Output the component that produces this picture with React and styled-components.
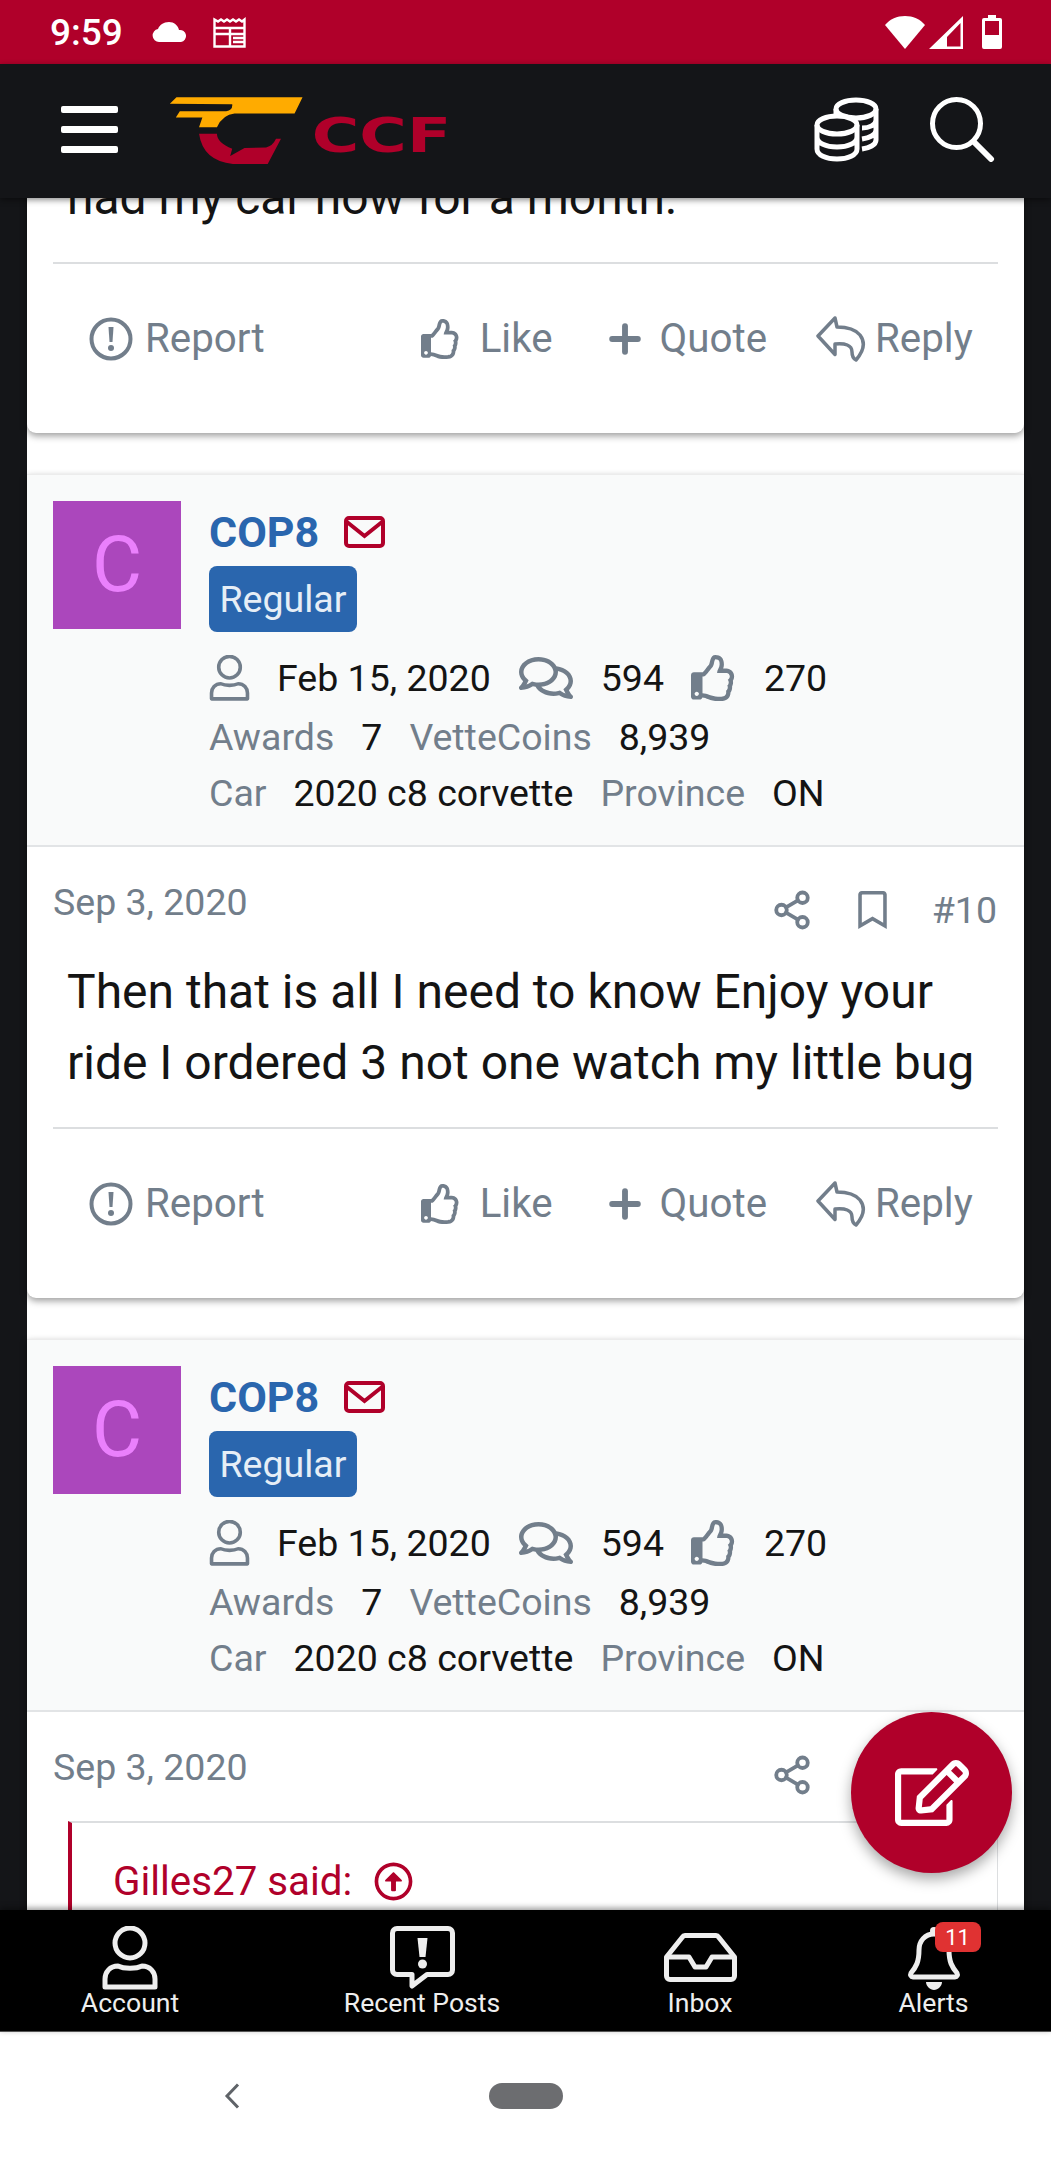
import React from 'react'
import styled, { createGlobalStyle } from 'styled-components'
import { FaRegThumbsUp, FaRegComments, FaRegEdit, FaRegBookmark, FaRegArrowAltCircleUp } from 'react-icons/fa'
import { LuShare2, LuPlus } from 'react-icons/lu'

const RED = '#b0002a'
const BLUE = '#2a66ae'
const MUTED = '#727e8b'
const INK = '#141414'

const GlobalStyle = createGlobalStyle`
  html, body { margin: 0; padding: 0; background: #fff; }
  * { box-sizing: border-box; }
  body { font-family: Roboto, "Liberation Sans", sans-serif; }
`

/* ---------- drawn icons ---------- */

const CloudIcon = () => (
  <svg width="36" height="20" viewBox="0 0 36 20">
    <path fill="#fff" d="M7 20a6.500 6.500 0 0 1-1-12.900C7.500 3 11.500 0 17 0c5 0 9 3.500 10 8a6 6 0 0 1 2 12z" />
  </svg>
)

const NewsIcon = () => (
  <svg width="34" height="31" viewBox="0 0 34 31" fill="none" stroke="#fff" strokeWidth="2.400">
    <path d="M1.500 2.500l3.500 2 3-2 3 2 3-2 3 2 3-2 3 2 3-2 3 2 2.500-2V29.500H1.500z" />
    <path d="M2 11h30M2 17h30M17 11v18M20 21h12M20 25h12" />
  </svg>
)

const WifiIcon = () => (
  <svg width="40" height="33" viewBox="0 0 40 33">
    <path fill="#fff" d="M0 9C5 3 12 0 20 0s15 3 20 9L20 33z" />
  </svg>
)

const SignalIcon = () => (
  <svg width="34" height="33" viewBox="0 0 34 33">
    <path fill="#fff" fillRule="evenodd" d="M34 0v33H0zM31.500 7L18 21v9.500h13.500z" />
  </svg>
)

const BatterySvg = styled.svg`
  margin-left: 15px;
`

const BatteryIcon = () => (
  <BatterySvg width="20" height="34" viewBox="0 0 20 34">
    <path fill="#fff" fillRule="evenodd" d="M6 0h8v3h4a2 2 0 0 1 2 2v27a2 2 0 0 1-2 2H2a2 2 0 0 1-2-2V5a2 2 0 0 1 2-2h4zM3 6v14h14V6z" />
  </BatterySvg>
)

const LogoSvg = styled.svg`
  margin-top: 3px;
`

const Logo = () => (
  <LogoSvg width="282" height="68" viewBox="510 112 845 205">
    <path fill="#ffab00" d="M510 132L530 113H910L886 162H705Q670 165 652 203H598L608 174H528L540 155H680Q700 152 698 134Z" />
    <path fill={RED} d="M598 223H652Q652 250 698 268L692 290L735 266L800 264Q820 260 830 238H845L805 314H700Q610 305 598 223Z" />
    <text x="938" y="277" fill={RED} fontFamily="'DejaVu Sans', sans-serif" fontWeight="700" fontSize="146" textLength="420" lengthAdjust="spacingAndGlyphs">CCF</text>
  </LogoSvg>
)

const CoinsIcon = () => (
  <svg width="65" height="65" viewBox="0 0 65 65" fill="none" stroke="#fff" strokeWidth="5">
    <ellipse cx="42" cy="12" rx="20" ry="9" />
    <path d="M62 12v31c0 5-7 8-14 9M62 23c0 5-7 8-14 8M62 33c0 5-7 8-14 9M22 12v9" />
    <ellipse cx="23" cy="28" rx="20" ry="9" fill="#141518" />
    <path d="M3 28v24c0 6 9 10 20 10s20-4 20-10V28M3 40c0 6 9 10 20 10s20-4 20-10" />
  </svg>
)

const SearchIcon = () => (
  <svg width="65" height="65" viewBox="0 0 65 65" fill="none" stroke="#fff">
    <circle cx="26.500" cy="26.500" r="24" strokeWidth="5" />
    <path d="M44 45l17 17" strokeWidth="6" strokeLinecap="round" />
  </svg>
)

const ReportIcon = () => (
  <svg width="44" height="44" viewBox="0 0 44 44" fill="none">
    <circle cx="22" cy="22" r="19.500" stroke={MUTED} strokeWidth="4" />
    <path d="M19.500 10h5l-1 15h-3z" fill={MUTED} />
    <circle cx="22" cy="31" r="3" fill={MUTED} />
  </svg>
)

const ReplyIcon = () => (
  <svg width="50" height="46" viewBox="0 0 50 46" fill="none" stroke={MUTED} strokeWidth="3.500" strokeLinejoin="round">
    <path d="M19 2L2 20l17 18.500V28c10-1 17 1 17 8 0 4 2 7 4 8 7-8 10-17 4-25-5-6-14-8-23-8z" />
  </svg>
)

const UserOutline = ({ color, width, height, stroke }) => (
  <svg width={width} height={height} viewBox="0 0 56 64" fill="none" stroke={color} strokeWidth={stroke} strokeLinejoin="round">
    <circle cx="28" cy="17" r="15" />
    <path d="M16 40c6 3 18 3 24 0 8 0 13 6 13 13v8H3v-8c0-7 5-13 13-13z" />
  </svg>
)

const EnvelopeIcon = () => (
  <svg width="41" height="32" viewBox="0 0 41 32" fill="none" stroke={RED} strokeWidth="4">
    <rect x="2" y="2" width="37" height="28" rx="3" />
    <path d="M3 6l17.500 14L38 6" />
  </svg>
)

const PostsIcon = () => (
  <svg width="65" height="64" viewBox="0 0 65 64" fill="none">
    <path d="M7 2.500h51a4.500 4.500 0 0 1 4.500 4.500v37a4.500 4.500 0 0 1-4.500 4.500H37L22 60V48.500H7A4.500 4.500 0 0 1 2.500 44V7A4.500 4.500 0 0 1 7 2.500z" stroke="#eee" strokeWidth="5" strokeLinejoin="round" />
    <path d="M27.500 12h10l-2 19h-6z" fill="#eee" />
    <circle cx="32.500" cy="38" r="4.500" fill="#eee" />
  </svg>
)

const InboxIcon = () => (
  <svg width="73" height="49" viewBox="0 0 73 49" fill="none" stroke="#eee" strokeWidth="5" strokeLinejoin="round">
    <path d="M21 2.500h31a3 3 0 0 1 2.500 1.500L70.500 24v19a3.500 3.500 0 0 1-3.500 3.500H6A3.500 3.500 0 0 1 2.500 43V24L18.500 4a3 3 0 0 1 2.500-1.500z" />
    <path d="M3 24h22l6 10h11l6-10h22" />
  </svg>
)

const BellIcon = () => (
  <svg width="56" height="64" viewBox="0 0 56 64" fill="none">
    <path d="M28 8c-9 0-15 7-15 16 0 12-3 17-8 23-1 2 0 4 2 4h42c2 0 3-2 2-4-5-6-8-11-8-23 0-9-6-16-15-16z" stroke="#eee" strokeWidth="5" strokeLinejoin="round" />
    <circle cx="28" cy="5" r="4" fill="#eee" />
    <path d="M20 56h16c0 4-4 8-8 8s-8-4-8-8z" fill="#eee" />
  </svg>
)

const ChevronLeft = () => (
  <svg width="16" height="26" viewBox="0 0 16 26" fill="none" stroke="#5f6368" strokeWidth="3">
    <path d="M14 1.500L3 13l11 11.500" />
  </svg>
)

/* ---------- page ---------- */

const Shell = styled.div`
  position: relative;
  width: 1051px;
  height: 2160px;
  overflow: hidden;
  display: flex;
  flex-direction: column;
`

const StatusBar = styled.div`
  flex: 0 0 64px;
  background: ${RED};
  display: flex;
  align-items: center;
  justify-content: space-between;
  padding: 0 49px 0 50px;
  color: #fff;
`

const StatusGroup = styled.div`
  display: flex;
  align-items: center;
  gap: ${p => p.$gap}px;
`

const Clock = styled.span`
  font-size: 37px;
  font-weight: 500;
  margin-right: 4px;
`

const TopBar = styled.header`
  flex: 0 0 134px;
  background: #141518;
  display: flex;
  align-items: center;
  padding: 0 56px 3px 61px;
  position: relative;
  z-index: 2;
  box-shadow: 0 2px 6px rgba(0, 0, 0, 0.45);
`

const Burger = styled.div`
  width: 57px;
  display: flex;
  flex-direction: column;
  gap: 13px;
  margin-right: 51px;
`

const BurgerBar = styled.span`
  height: 7px;
  border-radius: 2px;
  background: #fff;
`

const TopActions = styled.div`
  margin-left: auto;
  display: flex;
  align-items: center;
  gap: 51px;
`

const Viewport = styled.main`
  flex: 1;
  min-height: 0;
  overflow: hidden;
  background: #141518;
  padding: 0 27px;
`

const Feed = styled.div`
  margin-top: -36px;
  background: #fff;
  display: flex;
  flex-direction: column;
  gap: 41px;
`

const Card = styled.article`
  background: #fff;
  border-radius: 0 0 9px 9px;
  box-shadow: 0 3px 7px rgba(0, 0, 0, 0.38);
`

const UserHeader = styled.div`
  background: #f9fafa;
  border-top: 1px solid #ececec;
  border-bottom: 2px solid #e2e4e6;
  padding: 26px 26px 0;
  height: 373px;
  display: flex;
  gap: 28px;
`

const Avatar = styled.div`
  width: 128px;
  height: 128px;
  background: #ab47bc;
  color: #ea80fc;
  font-size: 77px;
  display: flex;
  align-items: center;
  justify-content: center;
`

const UserInfo = styled.div`
  display: flex;
  flex-direction: column;
`

const NameRow = styled.div`
  display: flex;
  align-items: center;
  gap: 25px;
  height: 56px;
  margin-top: 3px;
`

const UserName = styled.span`
  font-size: 43px;
  font-weight: 700;
  color: ${BLUE};
`

const Badge = styled.span`
  align-self: flex-start;
  margin-top: 6px;
  height: 66px;
  width: 148px;
  display: flex;
  align-items: center;
  justify-content: center;
  background: ${BLUE};
  color: #e6eef6;
  border-radius: 8px;
  font-size: 37.500px;
`

const StatRow = styled.div`
  display: flex;
  align-items: center;
  gap: 27px;
  height: 56px;
  margin-top: ${p => p.$top}px;
  font-size: 37.500px;
  color: ${INK};
  white-space: nowrap;
`

const Muted = styled.span`
  color: ${MUTED};
`

const StatThumb = styled(FaRegThumbsUp)`
  width: 46px;
  height: 46px;
  color: ${MUTED};
`

const StatChat = styled(FaRegComments)`
  width: 56px;
  height: 48px;
  color: ${MUTED};
`

const PostHead = styled.div`
  display: flex;
  justify-content: space-between;
  padding: 33px 27px 0 26px;
  height: 109px;
  color: ${MUTED};
  font-size: 37.500px;
`

const PostTools = styled.div`
  display: flex;
  align-items: center;
  gap: 44px;
  height: 74px;
  margin-top: -7px;
`

const ShareGlyph = styled(LuShare2)`
  width: 42px;
  height: 42px;
  color: ${MUTED};
  stroke-width: 2.200;
`

const BookmarkGlyph = styled(FaRegBookmark)`
  width: 31px;
  height: 38px;
  color: ${MUTED};
`

const Message = styled.p`
  margin: 0;
  padding: 0 26px 0 40px;
  font-size: 48px;
  line-height: 71px;
  color: ${INK};
  min-height: ${p => p.$lines * 71}px;
`

const ActionBar = styled.div`
  margin: 29px 26px 0;
  border-top: 2px solid #dcdee0;
  height: 171px;
  padding: 0 30px 20px 36px;
  display: flex;
  align-items: center;
  color: ${MUTED};
  font-size: 40.300px;
`

const ActionItem = styled.span`
  display: flex;
  align-items: center;
  gap: ${p => p.$gap}px;
  margin-left: ${p => p.$left || 0}px;
`

const ActionThumb = styled(FaRegThumbsUp)`
  width: 40px;
  height: 44px;
`

const ActionPlus = styled(LuPlus)`
  width: 44px;
  height: 44px;
  margin: 0 -4px;
  stroke-width: 3.200;
`

const Quote = styled.blockquote`
  margin: 0 26px 0 41px;
  border-left: 4px solid ${RED};
  border-top: 2px solid #dcdee0;
  border-right: 1px solid #dcdee0;
  height: 300px;
  padding: 35px 0 0 41px;
`

const QuoteAuthor = styled.div`
  display: flex;
  align-items: center;
  gap: 22px;
  color: ${RED};
  font-size: 40.300px;
`

const QuoteUp = styled(FaRegArrowAltCircleUp)`
  width: 39px;
  height: 39px;
`

const Fab = styled.button`
  position: absolute;
  left: 851px;
  top: 1712px;
  width: 161px;
  height: 161px;
  border: 0;
  border-radius: 50%;
  background: ${RED};
  box-shadow: 0 6px 14px rgba(0, 0, 0, 0.35);
  display: flex;
  align-items: center;
  justify-content: center;
  z-index: 3;
`

const FabGlyph = styled(FaRegEdit)`
  width: 74px;
  height: 66px;
  color: #fff;
`

const BottomNav = styled.nav`
  flex: 0 0 122px;
  background: #000;
  display: grid;
  grid-template-columns: 260px 324px 232px 235px;
  position: relative;
  z-index: 2;
  box-shadow: 0 -2px 6px rgba(0, 0, 0, 0.4);
  border-bottom: 1px solid #555;
`

const NavItem = styled.div`
  display: flex;
  flex-direction: column;
  align-items: center;
  color: #eee;
  font-size: 26.600px;
`

const NavIcon = styled.div`
  position: relative;
  height: 65px;
  margin-top: 15px;
  display: flex;
  align-items: center;
`

const NavLabel = styled.span`
  line-height: 30px;
  margin-top: -2px;
`

const Counter = styled.span`
  position: absolute;
  left: 29px;
  top: -3px;
  width: 46px;
  height: 30px;
  border-radius: 8px;
  background: #e03232;
  color: #fff;
  font-size: 22px;
  display: flex;
  align-items: center;
  justify-content: center;
`

const SystemNav = styled.div`
  flex: 0 0 128px;
  background: #fff;
  display: flex;
  align-items: flex-start;
  padding: 51px 0 0 224px;
`

const HomePill = styled.span`
  width: 74px;
  height: 26px;
  border-radius: 13px;
  background: #6c6d70;
  margin-left: 249px;
`

const Actions = () => (
  <ActionBar>
    <ActionItem $gap={12}><ReportIcon />Report</ActionItem>
    <ActionItem $gap={19} $left={156}><ActionThumb />Like</ActionItem>
    <ActionItem $gap={17} $left={54}><ActionPlus />Quote</ActionItem>
    <ActionItem $gap={9} $left={49}><ReplyIcon />Reply</ActionItem>
  </ActionBar>
)

const Author = () => (
  <UserHeader>
    <Avatar>C</Avatar>
    <UserInfo>
      <NameRow>
        <UserName>COP8</UserName>
        <EnvelopeIcon />
      </NameRow>
      <Badge>Regular</Badge>
      <StatRow $top={18}>
        <UserOutline color={MUTED} width={41} height={46} stroke={5} />
        <span>Feb 15, 2020</span>
        <StatChat />
        <span>594</span>
        <StatThumb />
        <span>270</span>
      </StatRow>
      <StatRow $top={3}>
        <Muted>Awards</Muted>
        <span>7</span>
        <Muted>VetteCoins</Muted>
        <span>8,939</span>
      </StatRow>
      <StatRow $top={0}>
        <Muted>Car</Muted>
        <span>2020 c8 corvette</span>
        <Muted>Province</Muted>
        <span>ON</span>
      </StatRow>
    </UserInfo>
  </UserHeader>
)

const Head = ({ number }) => (
  <PostHead>
    <span>Sep 3, 2020</span>
    <PostTools>
      <ShareGlyph />
      <BookmarkGlyph />
      <span>{number}</span>
    </PostTools>
  </PostHead>
)

export default function App() {
  return (
    <Shell>
      <GlobalStyle />
      <StatusBar>
        <StatusGroup $gap={25}>
          <Clock>9:59</Clock>
          <CloudIcon />
          <NewsIcon />
        </StatusGroup>
        <StatusGroup $gap={4}>
          <WifiIcon />
          <SignalIcon />
          <BatteryIcon />
        </StatusGroup>
      </StatusBar>

      <TopBar>
        <Burger>
          <BurgerBar />
          <BurgerBar />
          <BurgerBar />
        </Burger>
        <Logo />
        <TopActions>
          <CoinsIcon />
          <SearchIcon />
        </TopActions>
      </TopBar>

      <Viewport>
        <Feed>
          <Card>
            <Message $lines={1}>had my car now for a month.</Message>
            <Actions />
          </Card>
          <Card>
            <Author />
            <Head number="#10" />
            <Message $lines={2}>Then that is all I need to know Enjoy your ride I ordered 3 not one watch my little bug</Message>
            <Actions />
          </Card>
          <Card>
            <Author />
            <Head number="#11" />
            <Quote>
              <QuoteAuthor>Gilles27 said: <QuoteUp /></QuoteAuthor>
            </Quote>
          </Card>
        </Feed>
      </Viewport>

      <Fab><FabGlyph /></Fab>

      <BottomNav>
        <NavItem>
          <NavIcon><UserOutline color="#eee" width={56} height={64} stroke={5} /></NavIcon>
          <NavLabel>Account</NavLabel>
        </NavItem>
        <NavItem>
          <NavIcon><PostsIcon /></NavIcon>
          <NavLabel>Recent Posts</NavLabel>
        </NavItem>
        <NavItem>
          <NavIcon><InboxIcon /></NavIcon>
          <NavLabel>Inbox</NavLabel>
        </NavItem>
        <NavItem>
          <NavIcon><BellIcon /><Counter>11</Counter></NavIcon>
          <NavLabel>Alerts</NavLabel>
        </NavItem>
      </BottomNav>

      <SystemNav>
        <ChevronLeft />
        <HomePill />
      </SystemNav>
    </Shell>
  )
}
